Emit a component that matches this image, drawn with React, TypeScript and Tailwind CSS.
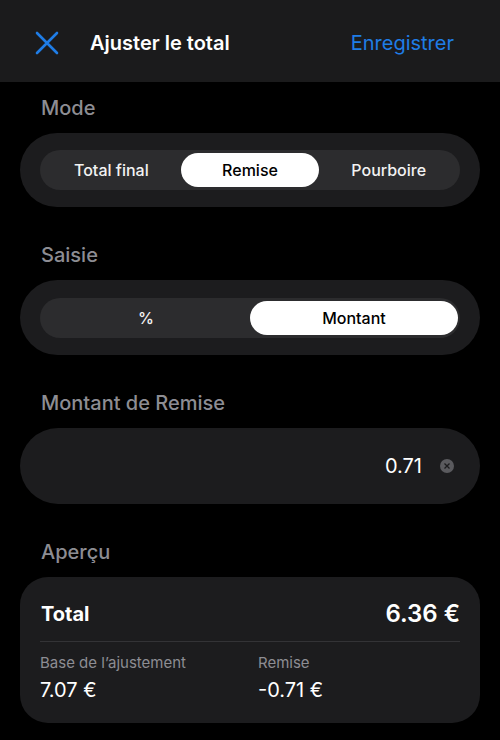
import { useState } from "react";

const font = { fontFamily: "Inter, 'Noto Sans', sans-serif" };

function Segmented({
  options,
  value,
  onChange,
  tall,
}: {
  options: string[];
  value: string;
  onChange: (v: string) => void;
  tall?: boolean;
}) {
  return (
    <div className={tall ? "rounded-full bg-[#1c1c1e] px-5 pb-[17px] pt-[18px]" : "rounded-full bg-[#1c1c1e] px-5 py-[17px]"}>
      <div className="flex h-10 rounded-full bg-[#2c2c2e] px-[2px] py-[3px]">
        {options.map((o) => (
          <button
            key={o}
            onClick={() => onChange(o)}
            className={
              o === value
                ? "flex-1 rounded-full bg-white text-[16px] font-medium text-black"
                : "flex-1 rounded-full text-[16px] font-medium text-[#f2f2f2]"
            }
          >
            {o}
          </button>
        ))}
      </div>
    </div>
  );
}

function Label({ children }: { children: React.ReactNode }) {
  return (
    <div className="h-6 pl-[21px] text-[20px] font-medium leading-6 text-[#8d8d93]">
      {children}
    </div>
  );
}

export default function App() {
  const [mode, setMode] = useState("Remise");
  const [entry, setEntry] = useState("Montant");

  return (
    <div className="min-h-[740px] w-[500px] bg-black text-white" style={font}>
      {/* ── Top bar ── */}
      <header className="flex h-[82px] items-center bg-[#1b1b1c] pl-[35px] pr-[46px] pt-[4px]">
        <svg width="24" height="24" viewBox="0 0 24 24" className="shrink-0">
          <path d="M2 2 L22 22 M22 2 L2 22" stroke="#1f7de6" strokeWidth="2.6" strokeLinecap="round" />
        </svg>
        <span className="ml-[31px] text-[20px] font-semibold">Ajuster le total</span>
        <span className="ml-auto text-[20px] text-[#1f7de6]">Enregistrer</span>
      </header>

      <main className="flex flex-col gap-9 px-5 pt-[14px]">
        <section className="flex flex-col gap-[13px]">
          <Label>Mode</Label>
          <Segmented options={["Total final", "Remise", "Pourboire"]} value={mode} onChange={setMode} />
        </section>

        <section className="flex flex-col gap-[13px]">
          <Label>Saisie</Label>
          <Segmented options={["%", "Montant"]} value={entry} onChange={setEntry} tall />
        </section>

        <section className="flex flex-col gap-[13px]">
          <Label>Montant de Remise</Label>
          <div className="flex h-[76px] items-center justify-end gap-[18px] rounded-full bg-[#1c1c1e] pr-[26px]">
            <span className="text-[20px]">0.71</span>
            <span className="flex h-[14px] w-[14px] items-center justify-center rounded-full bg-[#5a5a5e]">
              <svg width="6" height="6" viewBox="0 0 6 6">
                <path d="M0.5 0.5 L5.5 5.5 M5.5 0.5 L0.5 5.5" stroke="#1c1c1e" strokeWidth="1.3" />
              </svg>
            </span>
          </div>
        </section>

        <section className="flex flex-col gap-[13px]">
          <Label>Aperçu</Label>
          <div className="rounded-[28px] bg-[#1c1c1e] px-5 pb-5 pt-[23px]">
            <div className="flex h-7 items-center justify-between pl-px">
              <span className="text-[20px] font-bold">Total</span>
              <span className="text-[24px] font-semibold">6.36 €</span>
            </div>
            <div className="mt-[13px] h-px bg-[#333336]" />
            <div className="mt-[11px] grid grid-cols-2">
              <div>
                <div className="text-[15px] leading-5 text-[#8d8d93]">Base de l’ajustement</div>
                <div className="mt-1 text-[20px] leading-[26px]">7.07 €</div>
              </div>
              <div className="pl-[8px]">
                <div className="text-[15px] leading-5 text-[#8d8d93]">Remise</div>
                <div className="mt-1 text-[20px] leading-[26px]">-0.71 €</div>
              </div>
            </div>
          </div>
        </section>
      </main>
    </div>
  );
}
